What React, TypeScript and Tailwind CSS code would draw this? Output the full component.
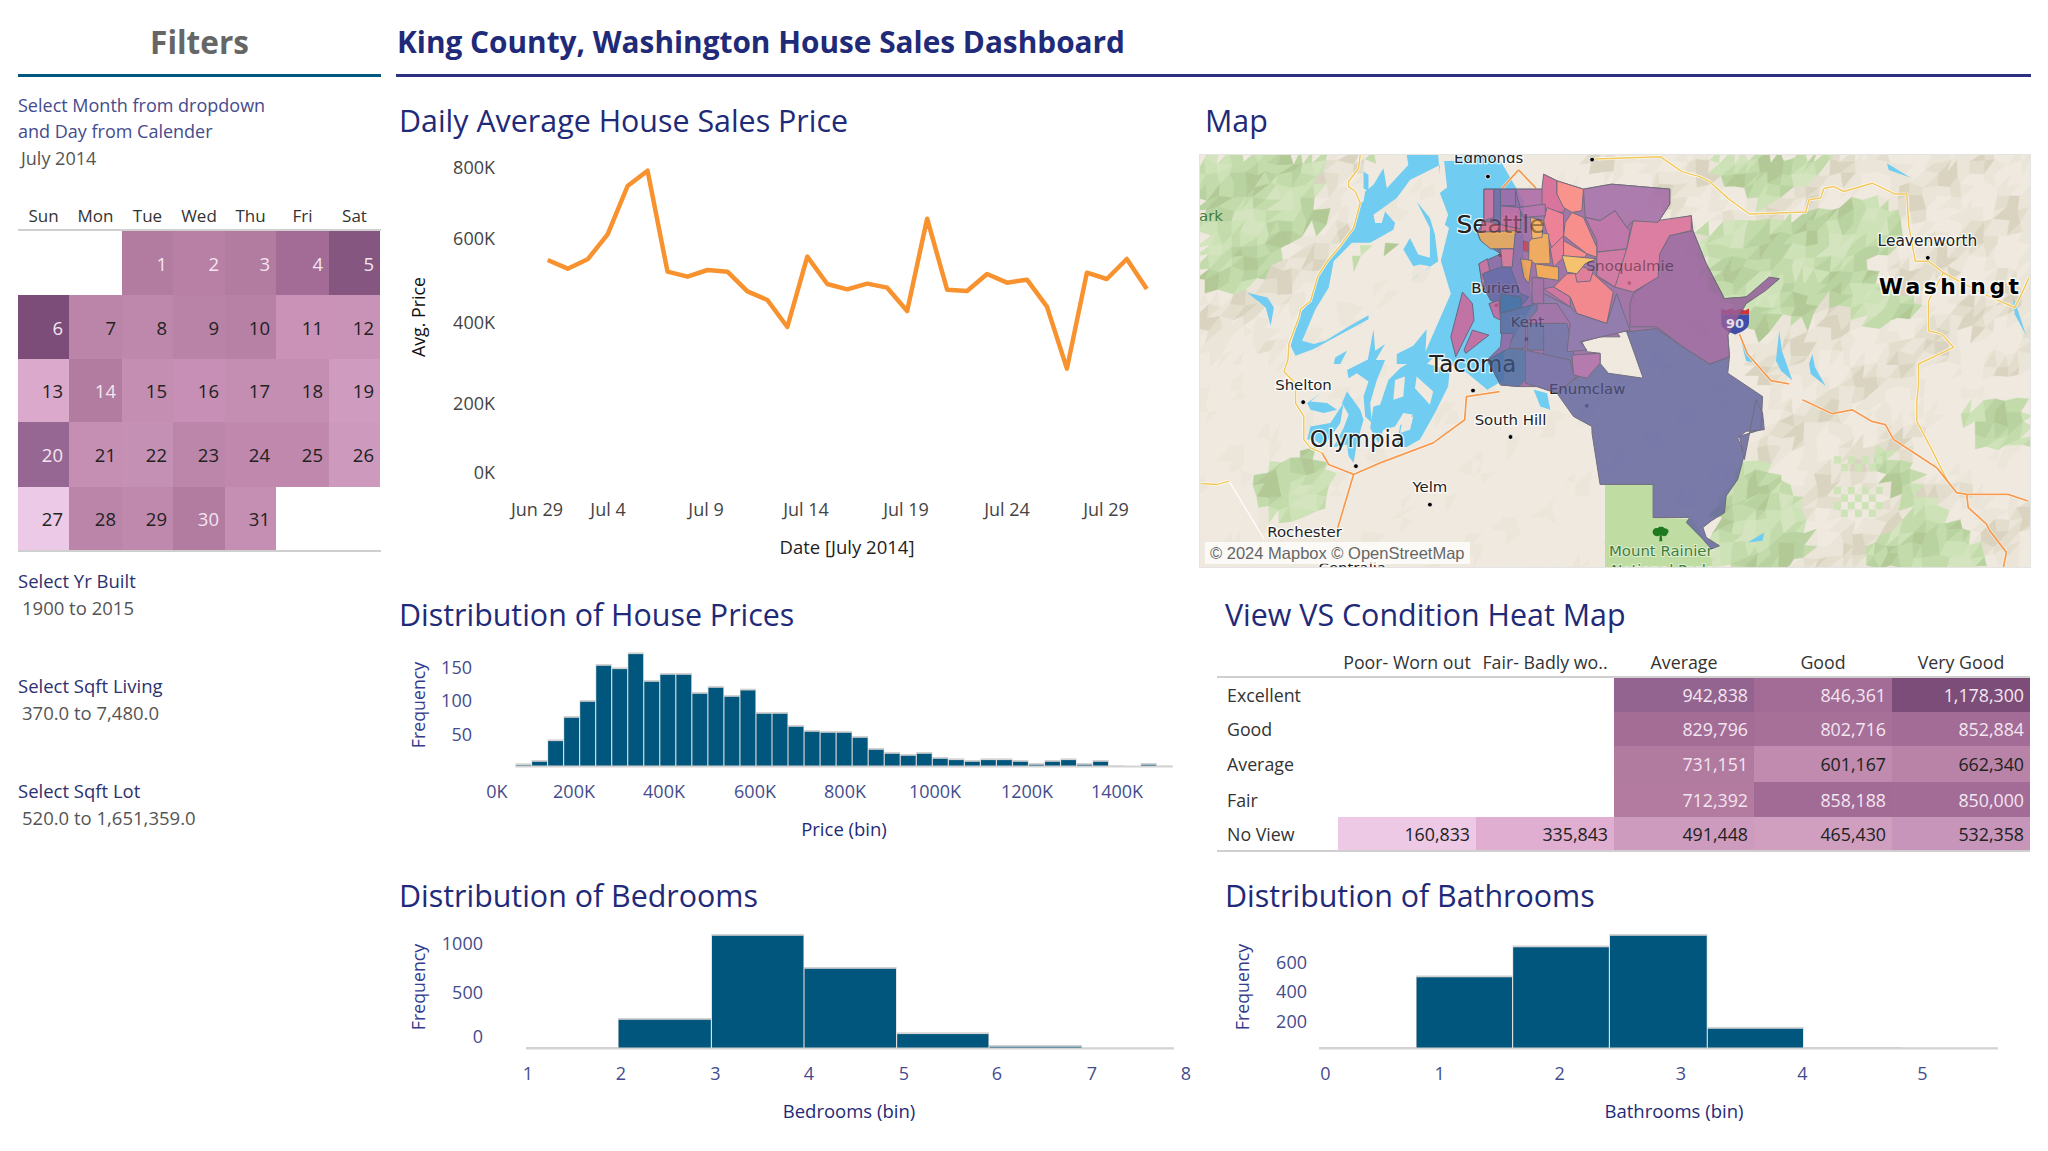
const navy = "fill-[#1f2a78]";

// ---------- calendar + heat map data ----------
const weekdays = ["Sun", "Mon", "Tue", "Wed", "Thu", "Fri", "Sat"];
const calendar: [number | null, string, boolean][] = [
  [null, "#ffffff", false], [null, "#ffffff", false], [1, "#b27ba0", true], [2, "#b880a5", true], [3, "#b27ba0", true], [4, "#a36c96", true], [5, "#845680", true],
  [6, "#7c4d78", true], [7, "#bb85a9", false], [8, "#be88ac", false], [9, "#b983a8", false], [10, "#b780a5", false], [11, "#c992b6", false], [12, "#c993b7", false],
  [13, "#dba9cb", false], [14, "#b27ba0", true], [15, "#c48db2", false], [16, "#c78fb5", false], [17, "#c48db2", false], [18, "#c48db2", false], [19, "#cf9bbe", false],
  [20, "#966793", true], [21, "#c58eb3", false], [22, "#c490b3", false], [23, "#bc86aa", false], [24, "#bf88ac", false], [25, "#bf88ac", false], [26, "#cd99bc", false],
  [27, "#ecc9e6", false], [28, "#bb85a9", false], [29, "#bf89ad", false], [30, "#b27ba0", true], [31, "#c58fb4", false], [null, "#ffffff", false], [null, "#ffffff", false],
];

const heat: { label: string; h: string; cells: ([string, string, boolean] | null)[] }[] = [
  { label: "Excellent", h: "h-[34px]", cells: [null, null, ["942,838", "#93648f", true], ["846,361", "#a36c96", true], ["1,178,300", "#7c4d78", true]] },
  { label: "Good", h: "h-[34px]", cells: [null, null, ["829,796", "#a36d96", true], ["802,716", "#a77098", true], ["852,884", "#a36c96", true]] },
  { label: "Average", h: "h-[36px]", cells: [null, null, ["731,151", "#b17a9f", true], ["601,167", "#c08bae", false], ["662,340", "#b982a7", false]] },
  { label: "Fair", h: "h-[35px]", cells: [null, null, ["712,392", "#b27b9f", true], ["858,188", "#a26b95", true], ["850,000", "#a36c96", true]] },
  { label: "No View", h: "h-[33px]", cells: [["160,833", "#edc9e6", false], ["335,843", "#dfaed0", false], ["491,448", "#cd9bbd", false], ["465,430", "#d09fc0", false], ["532,358", "#c795b9", false]] },
];

// ---------- chart data (values read off the picture, page pixels) ----------
const lineY = [480, 506, 478, 403, 258, 212, 515, 530, 510, 515, 574, 600, 681, 470, 552, 568, 551, 563, 633, 356, 569, 573, 522, 548, 539, 620, 806, 518, 537, 477, 567];
const linePoints = lineY.map((y, i) => `${547.7 + i * 19.97},${100 + y / 3}`).join(" ");

const priceTops = [520, 510, 448, 378, 330, 222, 232, 187, 270, 249, 249, 306, 288, 315, 296, 366, 366, 405, 420, 423, 423, 438, 474, 486, 492, 486, 501, 505, 510, 505, 505, 510, 519, 510, 505, 519, 510, 526, 528, 519, 527];
const priceBins = priceTops.map((t, i) => ({ x0: 515.5 + i * 16.03, x1: 515.5 + (i + 1) * 16.03, top: 590 + t / 3 }));

const bedBins = [
  { x0: 526, x1: 618, top: 1047 }, { x0: 618, x1: 711.4, top: 1018 }, { x0: 711.4, x1: 804, top: 934 },
  { x0: 804, x1: 896.6, top: 967 }, { x0: 896.6, x1: 989, top: 1032.3 }, { x0: 989, x1: 1082, top: 1045 }, { x0: 1082, x1: 1174, top: 1047.5 },
];

const bathBins = [
  { x0: 1319, x1: 1416, top: 1047 }, { x0: 1416, x1: 1512.6, top: 975.5 }, { x0: 1512.6, x1: 1609.4, top: 945.5 },
  { x0: 1609.4, x1: 1707.3, top: 934 }, { x0: 1707.3, x1: 1803.6, top: 1027 }, { x0: 1803.6, x1: 1901.5, top: 1047 }, { x0: 1901.5, x1: 1998, top: 1047.5 },
];

function Bars({ bins, base }: { bins: { x0: number; x1: number; top: number }[]; base: number }) {
  return (
    <g>
      <rect x={bins[0].x0} y={base - 1} width={bins[bins.length - 1].x1 - bins[0].x0} height={2} className="fill-[#d4d4d4]" />
      {bins.map((b) => (
        <g key={b.x0}>
          <rect x={b.x0} y={b.top} width={b.x1 - b.x0} height={base - b.top} className="fill-[#d2d2d2]" />
          {base - b.top > 3 && <rect x={b.x0 + 0.6} y={b.top + 1.8} width={b.x1 - b.x0 - 1.2} height={base - b.top - 2.8} className="fill-[#00567c]" />}
        </g>
      ))}
    </g>
  );
}

function Tick({ x, y, children, end, className = "fill-[#444c8c]" }: { x: number; y: number; children: React.ReactNode; end?: boolean; className?: string }) {
  return (
    <text x={x} y={y + 6} textAnchor={end ? "end" : "middle"} className={`text-[18px] ${className}`}>
      {children}
    </text>
  );
}

function VLabel({ x, y, children, className }: { x: number; y: number; children: React.ReactNode; className: string }) {
  return (
    <text transform={`translate(${x + 6} ${y}) rotate(-90)`} textAnchor="middle" className={`text-[17.8px] font-medium ${className}`}>
      {children}
    </text>
  );
}

function AxisTitle({ x, y, children, className = navy }: { x: number; y: number; children: React.ReactNode; className?: string }) {
  return (
    <text x={x} y={y + 6} textAnchor="middle" className={`text-[18.5px] font-medium ${className}`}>
      {children}
    </text>
  );
}

function LineChart() {
  return (
    <svg viewBox="396 139 803 429" className="block h-[429px] w-[803px]">
      <VLabel x={419} y={317} className="fill-[#111111]">Avg. Price</VLabel>
      {[["800K", 168], ["600K", 239], ["400K", 323], ["200K", 404], ["0K", 473]].map(([t, y]) => (
        <Tick key={t} x={495} y={y as number} end className="fill-[#444444]">{t}</Tick>
      ))}
      {[["Jun 29", 537], ["Jul 4", 608], ["Jul 9", 706], ["Jul 14", 806], ["Jul 19", 906], ["Jul 24", 1007], ["Jul 29", 1106]].map(([t, x]) => (
        <Tick key={t} x={x as number} y={510} className="fill-[#444444]">{t}</Tick>
      ))}
      <AxisTitle x={847} y={548} className="fill-[#222222]">Date [July 2014]</AxisTitle>
      <polyline points={linePoints} fill="none" strokeWidth={4.5} strokeLinejoin="round" className="stroke-[#f7922e]" />
    </svg>
  );
}

function PriceChart() {
  return (
    <svg viewBox="396 633 803 243" className="block h-[243px] w-[803px]">
      <VLabel x={419} y={705} className="fill-[#343b8c]">Frequency</VLabel>
      {[["150", 668], ["100", 701], ["50", 735]].map(([t, y]) => (
        <Tick key={t} x={472} y={y as number} end>{t}</Tick>
      ))}
      {[["0K", 497], ["200K", 574], ["400K", 664], ["600K", 755], ["800K", 845], ["1000K", 935], ["1200K", 1027], ["1400K", 1117]].map(([t, x]) => (
        <Tick key={t} x={x as number} y={792}>{t}</Tick>
      ))}
      <AxisTitle x={844} y={830}>Price (bin)</AxisTitle>
      <Bars bins={priceBins} base={766.5} />
    </svg>
  );
}

function BedroomChart() {
  return (
    <svg viewBox="396 914 803 237" className="block h-[237px] w-[803px]">
      <VLabel x={419} y={987} className="fill-[#343b8c]">Frequency</VLabel>
      {[["1000", 944], ["500", 993], ["0", 1037]].map(([t, y]) => (
        <Tick key={t} x={483} y={y as number} end>{t}</Tick>
      ))}
      {[["1", 528], ["2", 621], ["3", 715.5], ["4", 809], ["5", 904], ["6", 997], ["7", 1092], ["8", 1186]].map(([t, x]) => (
        <Tick key={t} x={x as number} y={1074}>{t}</Tick>
      ))}
      <AxisTitle x={849} y={1112}>Bedrooms (bin)</AxisTitle>
      <Bars bins={bedBins} base={1048.5} />
    </svg>
  );
}

function BathroomChart() {
  return (
    <svg viewBox="1199 914 832 237" className="block h-[237px] w-[832px]">
      <VLabel x={1243} y={987} className="fill-[#343b8c]">Frequency</VLabel>
      {[["600", 963], ["400", 992], ["200", 1022]].map(([t, y]) => (
        <Tick key={t} x={1307} y={y as number} end>{t}</Tick>
      ))}
      {[["0", 1325.5], ["1", 1439.6], ["2", 1559.7], ["3", 1681], ["4", 1802.5], ["5", 1922.5]].map(([t, x]) => (
        <Tick key={t} x={x as number} y={1074}>{t}</Tick>
      ))}
      <AxisTitle x={1674} y={1112}>Bathrooms (bin)</AxisTitle>
      <Bars bins={bathBins} base={1048.5} />
    </svg>
  );
}

// ---------- map ----------
// coordinates below were read from crops of the map, each helper maps one crop to svg space
type P = [number, number];
const z2 = (x: number, y: number): P => [(x - 17) / 1.827, (y - 40) / 3];
const z8 = (x: number, y: number): P => [201 + x / 3, 6 + y / 3];
const za = (x: number, y: number): P => [x / 3, y / 3];
const zb = (x: number, y: number): P => [x / 3, 206 + y / 3];
const zc = (x: number, y: number): P => [501 + x / 3, y / 3];
const zd = (x: number, y: number): P => [401 + x / 3, 246 + y / 3];
const from = (f: (x: number, y: number) => P, n: number[]) => {
  const out: P[] = [];
  for (let i = 0; i < n.length; i += 2) out.push(f(n[i], n[i + 1]));
  return out;
};
const str = (p: P[]) => p.map(([x, y]) => `${x.toFixed(1)},${y.toFixed(1)}`).join(" ");

const greenZones = [
  from(za, [0, 0, 370, 0, 360, 60, 350, 120, 370, 200, 290, 240, 215, 340, 160, 400, 70, 420, 0, 400]),
  from(zc, [30, 0, 410, 0, 360, 70, 250, 130, 190, 160, 130, 110, 60, 70]),
  from(zc, [0, 220, 150, 190, 280, 190, 360, 170, 520, 125, 600, 180, 610, 280, 500, 320, 680, 470, 540, 520, 480, 480, 380, 430, 330, 510, 250, 490, 170, 555, 130, 480, 20, 400]),
  from(zd, [330, 380, 440, 170, 540, 220, 600, 290, 640, 470, 560, 510, 330, 510]),
  from(zd, [800, 120, 945, 200, 960, 280, 1010, 295, 1150, 440, 1160, 510, 780, 510, 830, 410, 930, 370]),
  from(zd, [1090, 20, 1290, 0, 1290, 130, 1170, 150, 1100, 70]),
  from(zb, [150, 380, 210, 310, 330, 280, 390, 320, 390, 400, 340, 470, 230, 480, 170, 440]),
  from(za, [430, 320, 500, 280, 510, 300, 470, 330]),
  from(za, [565, 265, 590, 300, 570, 300]),
  from(za, [730, 95, 760, 90, 745, 115]),
  from(za, [510, 10, 535, 10, 530, 50, 515, 40]),
];
const hillZones = [
  from(za, [370, 0, 480, 0, 480, 150, 420, 280, 350, 370, 290, 470, 260, 570, 130, 620, 0, 620, 0, 400]),
  from(z2, [700, 40, 1560, 40, 1560, 700, 1340, 700, 1340, 1000, 1560, 1100, 1560, 1300, 1000, 1300, 1060, 800, 930, 300]),
];
const inside = (x: number, y: number, poly: P[]) => {
  let c = false;
  for (let i = 0, j = poly.length - 1; i < poly.length; j = i++) {
    const [xi, yi] = poly[i];
    const [xj, yj] = poly[j];
    if (yi > y !== yj > y && x < ((xj - xi) * (y - yi)) / (yj - yi) + xi) c = !c;
  }
  return c;
};
const buildMesh = () => {
  let seed = 1234;
  const rnd = () => {
    seed = (seed * 16807) % 2147483647;
    return seed / 2147483647;
  };
  const cell = 12;
  const cols = 71;
  const rows = 36;
  const v: P[][] = [];
  for (let r = 0; r <= rows; r++) {
    v[r] = [];
    for (let c = 0; c <= cols; c++) v[r][c] = [c * cell + (rnd() - 0.5) * 7 - 5, r * cell + (rnd() - 0.5) * 7 - 5];
  }
  const pick = (x: number, y: number) => {
    const s = Math.sin(x * 0.05 + y * 0.08) + Math.sin(x * 0.13 - y * 0.07) * 0.8 + (rnd() - 0.5) * 1.1;
    if (greenZones.some((z) => inside(x, y, z))) {
      if (s > 1.2) return "#d4e4bf";
      if (s > 0.4) return "#cde2b6";
      if (s > -0.5) return "#c3dbab";
      if (s > -1.2) return "#b8d2a0";
      return "#b2c996";
    }
    if (hillZones.some((z) => inside(x, y, z))) {
      if (s > 1.2) return "#d9d3c0";
      if (s > 0.5) return "#e3ddcd";
      if (s > -0.5) return "#ebe5d9";
      return "#efe9df";
    }
    return s > 1.3 ? "#ece6da" : "#efe9df";
  };
  const tris: { p: string; c: string }[] = [];
  for (let r = 0; r < rows; r++) {
    for (let c = 0; c < cols; c++) {
      const [a, b, d, e] = [v[r][c], v[r][c + 1], v[r + 1][c], v[r + 1][c + 1]];
      tris.push({ p: str([a, b, d]), c: pick(a[0] + 4, a[1] + 4) });
      tris.push({ p: str([b, e, d]), c: pick(e[0] - 4, e[1] - 4) });
    }
  }
  return tris;
};
const mesh = buildMesh();

// farm land checker east of the Rainier park
const checker: P[] = [];
for (let r = 0; r < 8; r++) {
  for (let c = 0; c < 7; c++) {
    if ((r + c) % 2 === 0 && !(r > 1 && r < 4)) checker.push(zd(705 + c * 21, 170 + r * 23));
  }
}

const water = [
  from(za, [480, 145, 455, 225, 415, 280, 385, 315, 352, 370, 330, 440, 300, 475, 270, 575, 285, 605, 340, 585, 385, 560, 505, 495, 505, 483, 440, 520, 375, 560, 340, 570, 305, 560, 345, 465, 385, 400, 400, 320, 455, 265, 510, 265, 580, 225, 585, 205, 555, 170, 545, 205, 525, 205, 520, 180, 590, 130, 630, 75, 720, 30, 720, 60, 715, 0, 620, 0, 625, 30, 560, 100, 550, 40, 520, 90, 495, 110, 490, 140]),
  from(za, [490, 50, 505, 60, 505, 110, 490, 100]),
  from(za, [650, 140, 690, 190, 705, 240, 715, 320, 650, 365, 625, 385, 690, 335, 660, 330, 640, 335, 610, 285, 630, 250, 655, 300, 690, 310, 690, 220]),
  from(za, [720, 115, 790, 60, 770, 20, 780, 0, 900, 0, 905, 100, 910, 460, 900, 600, 730, 640, 760, 560, 750, 460, 790, 410, 780, 340, 735, 300, 770, 300, 755, 225, 735, 210, 745, 180, 730, 140]),
  from(z8, [130, 0, 300, 0, 370, 120, 370, 300, 400, 430, 310, 580, 310, 660, 260, 690, 200, 640, 100, 590, 40, 650, 80, 560, 150, 400, 120, 300, 150, 180]),
  from(za, [140, 415, 200, 430, 220, 460, 210, 515, 195, 460]),
  // south sound fingers
  from(za, [520, 525, 525, 590, 555, 570, 520, 630, 500, 630, 510, 580]),
  from(za, [640, 575, 680, 525, 675, 630, 590, 630, 590, 600]),
  from(za, [440, 590, 405, 610, 400, 630, 420, 630]),
  from(zb, [600, 25, 640, 0, 750, 30, 745, 80, 705, 160, 660, 240, 620, 262, 590, 262, 600, 198, 640, 165, 610, 160, 585, 200, 550, 210, 535, 250, 510, 205, 520, 140, 540, 135, 565, 60]),
  from(zb, [500, 0, 555, 0, 530, 60, 510, 130, 515, 190, 495, 170, 490, 110, 505, 65, 470, 40, 445, 55, 440, 30]),
  from(zb, [440, 95, 480, 150, 490, 180, 470, 250, 460, 310, 445, 290, 440, 255, 400, 262, 430, 205, 445, 165, 425, 130]),
  from(zb, [320, 130, 360, 100, 330, 125, 380, 130, 410, 150, 370, 160, 330, 150]),
  from(zb, [330, 200, 390, 190, 430, 130, 420, 190, 370, 260, 340, 240, 320, 240]),
  from(zb, [710, 240, 745, 210, 720, 240]),
  from(z8, [400, 690, 440, 700, 450, 750, 420, 740]),
  from(zc, [565, 25, 635, 68, 570, 45]),
  from(zc, [240, 530, 248, 590, 280, 680, 245, 650, 230, 620]),
  from(zc, [340, 600, 348, 640, 380, 696, 335, 660, 330, 630]),
  from(zc, [125, 560, 160, 625, 140, 620]),
  from(zc, [945, 430, 960, 470, 985, 545, 950, 480]),
  from(zd, [445, 430, 495, 400, 490, 425]),
];
// land left showing inside the south sound
const islands = [
  from(zb, [650, 50, 700, 95, 690, 135, 645, 85]),
  from(zb, [585, 60, 615, 50, 610, 110, 580, 120]),
  from(zb, [610, 170, 640, 170, 630, 210, 600, 220]),
];

const county: [string, string][] = [
  [str([...from(z8, [470, 700, 520, 660, 600, 610, 625, 640, 730, 655, 700, 570, 680, 515, 770, 505, 850, 560, 930, 612, 990, 590, 985, 640, 1090, 710, 1085, 810, 1020, 830, 1035, 900]), ...from(zd, [470, 0, 490, 40, 495, 90, 440, 95, 415, 115, 435, 165, 415, 240, 380, 290, 375, 340, 335, 365, 310, 385, 320, 415, 360, 440, 335, 450, 310, 420, 260, 370, 270, 355, 160, 355, 160, 255, 0, 255]), ...from(z2, [735, 880]), ...from(z8, [575, 800, 520, 770])]), "#6668a0"],
  // base under the finer parcels, so no gaps show between them
  [str(from(z8, [250, 85, 430, 85, 430, 40, 470, 60, 550, 85, 635, 70, 810, 85, 810, 130, 775, 185, 875, 165, 880, 210, 920, 310, 975, 415, 1040, 410, 1140, 355, 1040, 430, 985, 525, 990, 590, 930, 612, 850, 560, 770, 505, 680, 515, 640, 500, 660, 530, 600, 530, 545, 545, 560, 575, 600, 580, 600, 610, 520, 660, 470, 700, 410, 680, 355, 680, 300, 675, 260, 600, 300, 560, 310, 440, 270, 420, 245, 375, 235, 310, 300, 280, 240, 240, 230, 215, 250, 180])), "#96649f"],
  [str(from(z8, [690, 500, 770, 500, 850, 560, 930, 612, 990, 590, 985, 525, 1040, 430, 1100, 390, 1140, 355, 1110, 350, 1040, 410, 975, 415, 920, 310, 880, 210, 810, 225, 780, 280, 770, 350, 700, 400, 690, 430])), "#955f9a"],
  [str(from(z8, [700, 180, 770, 180, 875, 165, 875, 210, 810, 225, 780, 280, 775, 350, 700, 395, 645, 380, 590, 350, 590, 275, 680, 265])), "#d96d97"],
  [str(from(z8, [550, 85, 635, 70, 810, 85, 810, 130, 775, 185, 700, 180, 680, 200, 645, 150, 600, 180, 555, 170])), "#a36ba6"],
  [str(from(z8, [555, 170, 600, 180, 645, 150, 680, 200, 690, 210, 680, 265, 590, 275, 590, 240, 570, 200])), "#b666a2"],
  [str(from(z8, [590, 275, 680, 265, 645, 380, 590, 345])), "#cc6b9b"],
  [str(from(z8, [515, 155, 550, 170, 590, 260, 590, 290, 560, 280, 490, 225, 495, 185])), "#f98280"],
  [str(from(z8, [480, 235, 560, 280, 555, 290, 490, 290])), "#f98280"],
  [str(from(z8, [460, 380, 500, 340, 580, 340, 640, 395, 620, 490, 530, 460, 510, 410])), "#f27a82"],
  [str(from(z8, [430, 40, 470, 60, 470, 100, 495, 135, 490, 155, 440, 150, 420, 125, 425, 80])), "#d66292"],
  [str(from(z8, [470, 60, 550, 85, 545, 150, 515, 155, 490, 140, 470, 100])), "#fd8580"],
  [str(from(z8, [440, 140, 490, 160, 490, 225, 455, 265, 440, 220, 430, 180])), "#ec708c"],
  [str(from(z8, [450, 265, 490, 225, 490, 290, 460, 320])), "#e8708c"],
  [str(from(z8, [520, 310, 580, 330, 570, 362, 530, 365])), "#dd6e92"],
  [str(from(z8, [485, 285, 590, 295, 555, 310, 530, 340, 500, 335])), "#f7bc5c"],
  [str(from(z8, [405, 310, 475, 320, 475, 360, 410, 350])), "#f3a145"],
  [str(from(z8, [410, 215, 445, 220, 450, 310, 405, 310, 385, 300, 385, 245])), "#f1a24f"],
  [str(from(z8, [390, 170, 430, 180, 425, 230, 395, 235])), "#f5aa58"],
  [str(from(z8, [360, 295, 395, 300, 385, 370, 370, 350])), "#f09a48"],
  [str(from(z8, [250, 85, 280, 85, 280, 170, 250, 180])), "#d56a99"],
  [str(from(z8, [280, 85, 300, 85, 300, 280, 280, 250])), "#7464a0"],
  [str(from(z8, [300, 85, 345, 85, 345, 135, 300, 135])), "#a064a2"],
  [str(from(z8, [345, 85, 425, 85, 425, 135, 360, 140, 350, 110])), "#ac66a4"],
  [str(from(z8, [300, 135, 360, 140, 360, 205, 300, 205])), "#c5639c"],
  [str(from(z8, [355, 140, 435, 130, 435, 165, 370, 170])), "#ae65a6"],
  [str(from(z8, [245, 180, 360, 205, 345, 225, 240, 215])), "#d86688"],
  [str(from(z8, [230, 215, 345, 210, 340, 265, 270, 265, 240, 240])), "#f2a350"],
  [str(from(z8, [300, 265, 340, 265, 335, 320, 305, 320])), "#e4728f"],
  [str(from(z8, [368, 240, 385, 245, 385, 275, 370, 270])), "#c8304f"],
  [str(from(z8, [235, 310, 260, 295, 270, 345, 245, 375])), "#d66898"],
  [str(from(z8, [245, 340, 300, 320, 330, 320, 360, 400, 385, 410, 370, 430, 300, 430, 270, 420])), "#6c5f9e"],
  [str(from(z8, [300, 400, 360, 410, 365, 440, 300, 460])), "#45689c"],
  [str(from(z8, [185, 395, 215, 430, 220, 480, 165, 590, 150, 530])), "#d0659a"],
  [str(from(z8, [190, 570, 215, 510, 265, 525, 195, 580])), "#d0659a"],
  [str(from(z8, [265, 430, 295, 420, 300, 480, 280, 470])), "#c6629c"],
  [str(from(z8, [300, 460, 410, 430, 410, 450, 375, 490, 375, 565, 325, 565, 340, 520, 300, 520])), "#5e689e"],
  [str(from(z8, [260, 600, 325, 565, 375, 570, 405, 640, 375, 660, 355, 680, 300, 675])), "#4c689e"],
  [str(from(z8, [380, 490, 430, 490, 430, 570, 380, 570])), "#5f68a0"],
  [str(from(z8, [430, 490, 500, 490, 520, 570, 520, 640, 430, 610])), "#6a68a2"],
  [str(from(z8, [410, 430, 470, 430, 510, 490, 500, 575, 560, 570, 540, 545, 690, 510, 650, 400, 620, 490, 530, 460, 510, 440, 430, 400])), "#846ca6"],
  [str(from(z8, [395, 350, 430, 355, 430, 430, 395, 430])), "#9a629e"],
  [str(from(z8, [430, 385, 460, 380, 510, 410, 510, 440])), "#cb6598"],
  [str(from(z8, [375, 570, 510, 600, 520, 640, 530, 650, 470, 700, 410, 680, 375, 670])), "#6e66a2"],
  [str(from(z8, [515, 585, 600, 580, 600, 610, 560, 655, 520, 645])), "#ac69a7"],
];

const orangeRoads: P[][] = [
  from(zb, [365, 280, 385, 315, 460, 345, 540, 310, 700, 250, 795, 180, 800, 110, 900, 95]),
  from(zb, [460, 345, 405, 530]),
  from(zc, [120, 540, 145, 600, 215, 680, 270, 690]),
  from(zd, [610, 0, 700, 42, 760, 30, 820, 65, 860, 75, 885, 120, 1015, 205, 1075, 280, 1105, 285, 1230, 285, 1290, 305]),
  from(zd, [1105, 285, 1110, 325, 1165, 375, 1175, 395, 1225, 460, 1215, 510]),
  from(z2, [600, 85, 570, 140]),
  from(z2, [600, 85, 632, 140]),
];
const yellowRoads: P[][] = [
  [...from(z2, [740, 52, 860, 45, 900, 90]), ...from(zc, [0, 65, 30, 80, 85, 130, 150, 178, 320, 172, 330, 135, 365, 130, 375, 100, 405, 95, 435, 110, 520, 85, 590, 118, 625, 118, 630, 210, 650, 320, 690, 320, 735, 355, 790, 385, 880, 430, 950, 460, 970, 420, 993, 370])],
  [...from(zc, [735, 355, 690, 440, 690, 530, 730, 540, 765, 580, 660, 630, 660, 696]), ...from(zd, [955, 0, 955, 65, 1000, 150, 1045, 240])],
  [...from(za, [480, 0, 475, 40, 445, 80, 445, 95, 465, 110, 480, 145, 460, 220, 415, 280, 385, 315, 352, 365, 330, 440, 300, 465, 295, 490, 265, 570, 262, 618]), ...from(zb, [250, 35, 285, 70, 285, 130, 310, 170, 310, 240, 330, 265, 365, 280])],
  from(zb, [0, 372, 50, 375, 85, 365]),
];

const labels: [string, number, number, number][] = [
  ["Edmonds", 289, 8, 15],
  ["Shelton", 103, 236, 15],
  ["Olympia", 157, 293, 23],
  ["Tacoma", 273, 218, 23],
  ["South Hill", 311, 271, 15],
  ["Yelm", 230, 339, 15],
  ["Rochester", 104, 384, 15],
  ["Burien", 296, 139, 15],
  ["Kent", 328, 173, 15],
  ["Snoqualmie", 431, 117, 15],
  ["Enumclaw", 388, 240, 15],
  ["Leavenworth", 730, 91, 15.5],
  ["Seattle", 301, 78, 25],
  ["Centralia", 152, 420, 15],
];
// these sit under the county layer but still read through it
const dimmed = ["Seattle", "Tacoma", "Burien", "Kent", "Snoqualmie", "Enumclaw"];
const dots: P[] = [za(865, 65), z2(735, 54), z8(298, 285), zc(688, 310), zb(308, 127), zb(467, 320), zb(820, 92), z8(330, 832), zb(690, 436), z8(560, 738), z8(688, 368), z8(287, 435), z8(378, 537)];
const mapFont = "font-['DejaVu_Sans',sans-serif]";

function MapView() {
  return (
    <div className="relative h-[414px] w-[832px] overflow-hidden border border-[#e4e4e4] bg-[#efe9df]">
      <svg viewBox="0 0 832 414" className={`block h-full w-full ${mapFont}`}>
        {mesh.map((t, i) => (
          <polygon key={i} points={t.p} fill={t.c} stroke={t.c} strokeWidth={0.6} />
        ))}
        {checker.map(([x, y], i) => (
          <rect key={i} x={x} y={y} width={7} height={7.5} className="fill-[#cfe3b9]" />
        ))}
        <polygon points={str(from(zd, [15, 255, 160, 255, 160, 355, 280, 360, 330, 450, 340, 510, 15, 510]))} className="fill-[#bfdca3]" />
        {water.map((w, i) => (
          <polygon key={i} points={str(w)} className="fill-[#70cdf1]" />
        ))}
        {islands.map((w, i) => (
          <polygon key={i} points={str(w)} className="fill-[#efe9df]" />
        ))}
        {[...yellowRoads, ...orangeRoads].map((r, i) => (
          <polyline key={i} points={str(r)} fill="none" strokeWidth={2.8} strokeLinejoin="round" className="stroke-white/90" />
        ))}
        <polyline points={str(from(zb, [85, 365, 190, 540]))} fill="none" strokeWidth={1.2} className="stroke-white" />
        {yellowRoads.map((r, i) => (
          <polyline key={i} points={str(r)} fill="none" strokeWidth={1.5} strokeLinejoin="round" className="stroke-[#f3c85a]" />
        ))}
        {orangeRoads.map((r, i) => (
          <polyline key={i} points={str(r)} fill="none" strokeWidth={1.8} strokeLinejoin="round" className="stroke-[#f59a4f]" />
        ))}
        {dots.map(([cx, cy]) => (
          <circle key={`${cx}-${cy}`} cx={cx} cy={cy} r={2.4} strokeWidth={0.8} className="fill-black stroke-white" />
        ))}
        {labels.map(([t, x, y, s]) => (
          <text key={t} x={x} y={y} textAnchor="middle" fontSize={s} strokeWidth={2.5} className="fill-[#222222] stroke-white/80 [paint-order:stroke]">
            {t}
          </text>
        ))}
        <text x={22} y={66} textAnchor="end" fontSize={15} className="fill-[#3f7d3a]">ark</text>
        <text x={681} y={140} fontSize={22} fontWeight={700} letterSpacing={3.5} strokeWidth={3} className="fill-black stroke-white/80 [paint-order:stroke]">
          Washingt
        </text>
        {/* Mount Rainier park */}
        <g transform="translate(462 381)">
          <path d="M-1 1C-3 3-7 2-8-1-9-4-6-7-3-6-2-8 2-8 4-6 7-6 9-3 7-1 6 2 3 3 1 1L1.500 7H-1.500z" className="fill-[#1f7a1f]" />
        </g>
        <text x={462} y={403} textAnchor="middle" fontSize={15} strokeWidth={2} className="fill-[#3f7d3a] stroke-white/50 [paint-order:stroke]">
          Mount Rainier
        </text>
        <text x={462} y={422} textAnchor="middle" fontSize={15} strokeWidth={2} className="fill-[#3f7d3a] stroke-white/50 [paint-order:stroke]">
          National Park
        </text>
        {/* I-90 shield */}
        <g transform={`translate(${zc(65, 460)[0]} ${zc(65, 460)[1]})`}>
          <path d="M0 1l5 2 5-2 4 2 5-2 5 2 4-2v6H0z" className="fill-[#d3303c]" />
          <path d="M0 7h28v8c0 6-6 9-14 12C6 24 0 21 0 15z" className="fill-[#3f4da8]" />
        </g>
        <g opacity={0.86} strokeWidth={1} strokeLinejoin="round" className="stroke-[#5e5a70]">
          {county.map(([p, c], i) => (
            <polygon key={i} points={p} fill={c} />
          ))}
        </g>
        <g opacity={0.32} aria-hidden="true">
          {labels.filter(([t]) => dimmed.includes(t)).map(([t, x, y, s]) => (
            <text key={t} x={x} y={y} textAnchor="middle" fontSize={s} className="fill-[#222222]">
              {t}
            </text>
          ))}
        </g>
        <text x={zc(65, 460)[0] + 14} y={zc(65, 460)[1] + 21} textAnchor="middle" fontSize={13} fontWeight={700} opacity={0.8} className="fill-white">
          90
        </text>
      </svg>
      <div className="absolute bottom-[3px] left-[5px] h-[22px] bg-white/75 px-[5px] font-['Liberation_Sans',sans-serif] text-[16.5px] leading-[22px] text-[#666666]">
        © 2024 Mapbox © OpenStreetMap
      </div>
    </div>
  );
}

// ---------- page pieces ----------
function FilterBlock({ label, value, className = "" }: { label: string; value: string; className?: string }) {
  return (
    <div className={className}>
      <div className="text-[18.5px] leading-[26px] font-medium text-[#2c3170]">{label}</div>
      <div className="mt-px pl-1 text-[18.5px] leading-[26px] text-[#555555]">{value}</div>
    </div>
  );
}

function Calendar() {
  const colWidths = "grid-cols-[51px_53px_51px_52px_51px_53px_51px]";
  return (
    <div className="w-[363px]">
      <div className={`grid h-[28px] ${colWidths} items-center border-b-2 border-[#cfcfcf]`}>
        {weekdays.map((d) => (
          <div key={d} className="text-center text-[17px] font-medium text-[#333333]">{d}</div>
        ))}
      </div>
      <div className={`grid ${colWidths} grid-rows-[64px_64px_63px_65px_63px] border-b-2 border-[#cfcfcf]`}>
        {calendar.map(([day, bg, light], i) => (
          <div
            key={i}
            style={{ backgroundColor: bg }}
            className={`flex items-center justify-end pt-px pr-[6px] text-[18.5px] ${light ? "text-[#f3e6f1]" : "text-[#222222]"}`}
          >
            {day}
          </div>
        ))}
      </div>
    </div>
  );
}

function Sidebar() {
  return (
    <aside className="ml-[18px] w-[363px] shrink-0">
      <div className="flex h-[77px] items-center justify-center border-b-[3px] border-[#00587f] pt-[10px] text-[31.5px] font-bold text-[#666666]">
        Filters
      </div>
      <div className="mt-[15px] text-[18px] leading-[26px] text-[#444c8c]">
        <div>Select Month from dropdown</div>
        <div>and Day from Calender</div>
        <div className="mt-px pl-[3px] text-[#555555]">July 2014</div>
      </div>
      <div className="mt-[32px]">
        <Calendar />
      </div>
      <FilterBlock className="mt-[16px]" label="Select Yr Built" value="1900 to 2015" />
      <FilterBlock className="mt-[52px]" label="Select Sqft Living" value="370.0 to 7,480.0" />
      <FilterBlock className="mt-[52px]" label="Select Sqft Lot" value="520.0 to 1,651,359.0" />
    </aside>
  );
}

function SectionTitle({ children, className = "" }: { children: React.ReactNode; className?: string }) {
  return <h2 className={`h-[38px] pt-px text-[30.4px] leading-[38px] text-[#1f2a78] ${className}`}>{children}</h2>;
}

function HeatMap() {
  const cols = "grid-cols-[121px_138px_138px_140px_138px_138px]";
  const headers = ["Poor- Worn out", "Fair- Badly wo..", "Average", "Good", "Very Good"];
  return (
    <div className="mt-[13px] ml-[18px] w-[813px]">
      <div className={`grid h-[32px] ${cols} items-center border-b-2 border-[#cfcfcf] pt-[2px] text-[17.8px] text-[#333333]`}>
        <div />
        {headers.map((h) => (
          <div key={h} className="text-center whitespace-nowrap">{h}</div>
        ))}
      </div>
      {heat.map((row) => (
        <div key={row.label} className={`grid ${row.h} ${cols} text-[17.8px]`}>
          <div className="flex items-center pt-px pl-[10px] text-[#333333]">{row.label}</div>
          {row.cells.map((cell, i) =>
            cell ? (
              <div
                key={i}
                style={{ backgroundColor: cell[1] }}
                className={`flex items-center justify-end pt-px pr-[6px] ${cell[2] ? "text-[#f3e6f1]" : "text-[#222222]"}`}
              >
                {cell[0]}
              </div>
            ) : (
              <div key={i} />
            ),
          )}
        </div>
      ))}
      <div className="h-[2px] bg-[#cfcfcf]" />
    </div>
  );
}

export default function App() {
  return (
    <div className="flex h-[1151px] w-[2048px] overflow-hidden bg-white font-['Open_Sans','Noto_Sans',sans-serif]">
      <Sidebar />
      <main className="ml-[15px] w-[1635px]">
        <h1 className="flex h-[77px] items-center border-b-[3px] border-[#2b3180] pt-[10px] pl-px text-[29.8px] font-bold text-[#1f2a78]">
          King County, Washington House Sales Dashboard
        </h1>
        <div className="grid grid-cols-[803px_832px]">
          <section className="pt-[24px]">
            <SectionTitle className="pl-[3px]">Daily Average House Sales Price</SectionTitle>
            <LineChart />
          </section>
          <section className="pt-[24px]">
            <SectionTitle className="pl-[6px]">Map</SectionTitle>
            <div className="mt-[15px]">
              <MapView />
            </div>
          </section>
          <section className="pt-[27px]">
            <SectionTitle className="pl-[3px]">Distribution of House Prices</SectionTitle>
            <PriceChart />
          </section>
          <section className="pt-[27px]">
            <SectionTitle className="pl-[26px]">View VS Condition Heat Map</SectionTitle>
            <HeatMap />
          </section>
          <section>
            <SectionTitle className="pl-[3px]">Distribution of Bedrooms</SectionTitle>
            <BedroomChart />
          </section>
          <section>
            <SectionTitle className="pl-[26px]">Distribution of Bathrooms</SectionTitle>
            <BathroomChart />
          </section>
        </div>
      </main>
    </div>
  );
}
